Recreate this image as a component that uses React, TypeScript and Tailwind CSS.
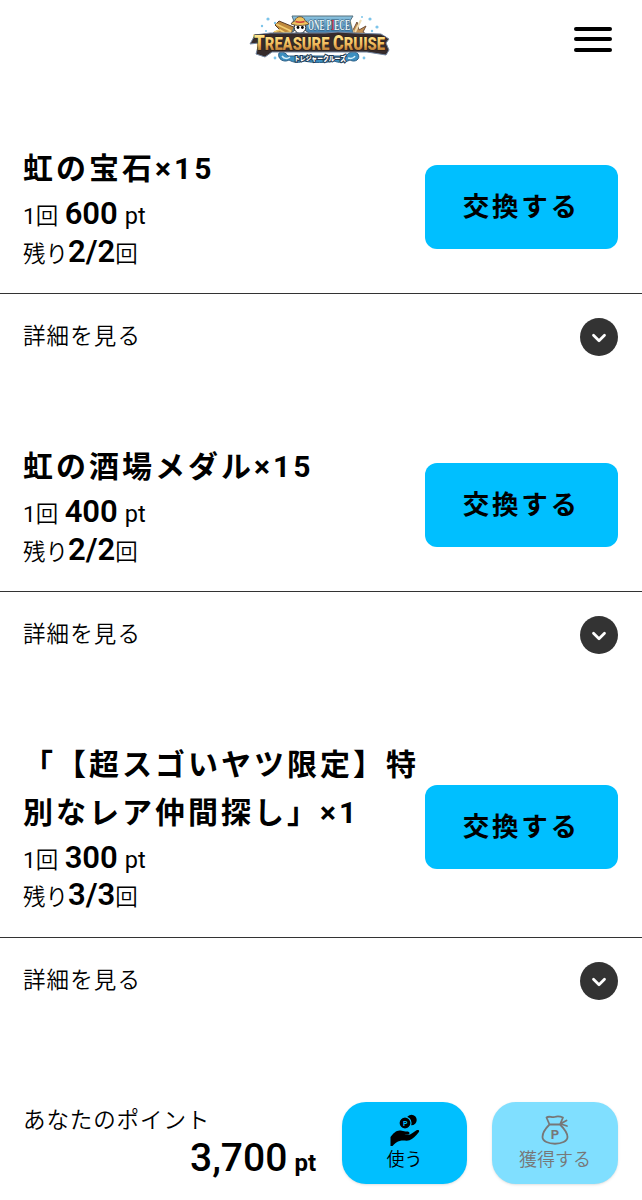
import { ChevronDown } from "lucide-react";

const rewards = [
  { title: "虹の宝石×15", cost: 600, left: "2/2" },
  { title: "虹の酒場メダル×15", cost: 400, left: "2/2" },
  { title: "「【超スゴいヤツ限定】特別なレア仲間探し」×1", cost: 300, left: "3/3" },
];

function Logo() {
  return (
    <svg width="144" height="54" viewBox="0 0 144 54" role="img" aria-label="One Piece Treasure Cruise">
      <defs>
        <linearGradient id="gold" x1="0" y1="0" x2="0" y2="1">
          <stop offset="0.2" stopColor="#ffe58a" />
          <stop offset="0.55" stopColor="#f0b95c" />
          <stop offset="0.9" stopColor="#a8672a" />
        </linearGradient>
        <linearGradient id="sea" x1="0" y1="0" x2="0" y2="1">
          <stop offset="0" stopColor="#8cc4e0" />
          <stop offset="1" stopColor="#3f7fae" />
        </linearGradient>
      </defs>

      {/* splashes and bubbles */}
      <path d="M31 41c3-2 7 0 9 3h58c3-4 8-6 12-2 3 5-3 9-8 6-6 3-11 3-16 1-8 2-21 2-30 0-5 2-10 2-15-1-5 3-12-1-10-7Z" fill="#3c8fc0" stroke="#2c5f86" />
      <path d="M34 44c2 3 5 3 8 1m58 1c3 1 6 0 7-2" fill="none" stroke="#d5f1fb" strokeWidth="1.5" />
      <g fill="#7cc4ea">
        <circle cx="20" cy="7" r="1.6" />
        <circle cx="27" cy="11" r="1.2" />
        <circle cx="14" cy="14" r="1.2" />
        <circle cx="18" cy="19" r="1" />
        <circle cx="122" cy="7" r="1.6" />
        <circle cx="129" cy="15" r="1.6" />
        <circle cx="114" cy="5" r="1" />
        <circle cx="124" cy="19" r="1.2" />
        <circle cx="27" cy="46" r="1.4" />
        <circle cx="116" cy="46" r="1.4" />
      </g>

      {/* treasure piles */}
      <path d="M23 24c2-4 6-5 9-6l-5-5 4-4 17 7 6 8Z" fill="#c08a3d" stroke="#573b28" />
      <path d="m28 12 15 7M26 20l6-2 5 3 6-1" fill="none" stroke="#f3cf72" strokeWidth="1.6" />
      <path d="m96 24 4-10 5 4 4-8 2 8 7-4-3 6 6 4Z" fill="#c59152" stroke="#71513c" />
      <path d="m102 9 3 12m8-13-6 12" stroke="#f0ddb2" strokeWidth="2" />

      {/* upper wordmark */}
      <path d="M44 4h61l-3 5 3 12H44l3-9Z" fill="url(#sea)" stroke="#55707f" />
      <text x="60" y="17.5" textLength="42" lengthAdjust="spacingAndGlyphs" fontSize="14" fontWeight="900" fill="#e4f3f7" stroke="#2f5878" strokeWidth="1.2" paintOrder="stroke" className="font-['Liberation_Serif',serif]">
        ONE P<tspan fill="#dc3945">I</tspan>ECE
      </text>

      {/* straw hat skull */}
      <path d="m44 10 16 12m0-12L44 22" stroke="#3c4145" strokeWidth="3" />
      <path d="m44 10 16 12m0-12L44 22" stroke="#fff" strokeWidth="1.7" />
      <circle cx="52" cy="15.500" r="5.800" fill="#fff" stroke="#333" />
      <path d="M43 12c1-2 3-2 4-3.500 1-5 9-5 10 0 1 1.500 3 1.500 4 3.500-6 2-12 2-18 0Z" fill="#efc45e" stroke="#55402d" strokeWidth="0.8" />
      <path d="M47.500 9.500q4.500 1.500 9 0" fill="none" stroke="#cc3838" strokeWidth="1.5" />
      <circle cx="50" cy="15.500" r="1.4" />
      <circle cx="54.400" cy="15.500" r="1.400" />

      {/* main wordmark */}
      <path d="m7 23 15-2 55 0 13-1 16 1 27 1 8 5-3 4 3 7-3 5-19-3H24l-7 5-9-3 3-11-9 1Z" fill="#352b2c" stroke="#7386a0" />
      <text fill="url(#gold)" stroke="#2c1b10" strokeWidth="1.2" paintOrder="stroke" fontWeight="900" fontSize="18" x="6" y="38" textLength="131" lengthAdjust="spacingAndGlyphs" className="font-['Roboto',sans-serif]">
        <tspan fontSize="21">T</tspan>REASURE <tspan fontSize="20">C</tspan>RUISE
      </text>
      <text x="46" y="48.500" textLength="52" lengthAdjust="spacingAndGlyphs" fontSize="6.500" fontWeight="900" fill="#fff" stroke="#223951" strokeWidth="2" paintOrder="stroke" className="font-['Noto_Sans_CJK_JP',sans-serif]">
        トレジャークルーズ
      </text>
    </svg>
  );
}

function CoinHandIcon() {
  return (
    <svg width="32" height="32" viewBox="0 0 32 32">
      <circle cx="22.500" cy="6" r="5.200" />
      <circle cx="16" cy="9" r="6" stroke="#00bfff" strokeWidth="1.2" />
      <text x="14" y="11.500" fontSize="7" fontWeight="700" fill="#00bfff" className="font-['Roboto',sans-serif]">P</text>
      <path d="M1.500 23c3-4 6-7 10-6.500 2 0 3 1 5 1 3-.2 4 .5 4 1.700 0 1.300-2 1.500-5 1.600 4 .7 6-.3 8-1.800l4-2.700c2-1 3.500.3 2.200 2-3 3.700-6 7-9.200 8-3 .8-6-.2-9 .4-4 .7-6 3.300-8.500 5.800H1.500Z" />
    </svg>
  );
}

function MoneyBagIcon() {
  return (
    <svg width="32" height="32" viewBox="0 0 32 32" fill="none" stroke="currentColor" strokeWidth="1.8" strokeLinecap="round" strokeLinejoin="round">
      <path d="M10.500 10.500 7.500 3.500c3-2 5 .5 8-.5s6-.5 8.500.5L21 10.500M10.500 10.500H21M10.500 10.500C6.500 14.500 3.500 18.500 3.500 23c0 9 25 9 25 0 0-4.500-3.500-8.500-7.500-12.500M22 9.500l5.500-3M22 10l6 2" />
      <text x="11.700" y="24.500" fontSize="13" fontWeight="700" fill="currentColor" stroke="none" className="font-['Roboto',sans-serif]">P</text>
    </svg>
  );
}

export default function App() {
  return (
    <main className="flex h-[1200px] w-[642px] flex-col overflow-hidden bg-white font-['Roboto','Noto_Sans_CJK_JP',sans-serif] text-black [text-spacing-trim:space-all]" lang="ja">
      <header className="grid h-[83px] shrink-0 grid-cols-[1fr_144px_1fr] items-center px-6 pb-[5px]">
        <span />
        <div className="-ml-px">
          <Logo />
        </div>
        <button className="mr-1.5 flex flex-col gap-[6.500px] justify-self-end" aria-label="メニュー">
          <span className="h-1 w-[38px] rounded-full bg-black" />
          <span className="h-1 w-[38px] rounded-full bg-black" />
          <span className="h-1 w-[38px] rounded-full bg-black" />
        </button>
      </header>

      {rewards.map((reward) => (
        <section key={reward.title} className="shrink-0 pt-[62px]">
          <div className="flex items-center justify-between border-b border-[#333] pr-6 pb-[20.5px] pl-[23px]">
            <div className="w-[400px]">
              <h2 className="text-[30px] leading-[47.5px] font-bold tracking-[3px]">{reward.title}</h2>
              <div className="mt-[4.5px] h-[38.5px] text-[22.5px] leading-[38.5px] font-[350] whitespace-nowrap">
                <span className="font-normal">1</span>回 <b className="ml-px text-[31px] leading-none font-semibold">{reward.cost}</b>
                <span className="ml-[7px] text-[23.5px] leading-none font-normal">pt</span>
              </div>
              <div className="h-[37px] text-[22.5px] leading-[37px] font-[350] whitespace-nowrap">
                残り<b className="text-[31px] leading-none font-semibold">{reward.left}</b>回
              </div>
            </div>
            <button className="mb-[3.5px] h-[84px] w-[193.5px] shrink-0 rounded-xl bg-[#00bfff] text-[26.5px] font-bold tracking-[2.7px]">
              交換する
            </button>
          </div>
          <div className="flex h-[86px] items-center justify-between pr-6 pl-[23px] mb-px">
            <span className="text-[22.5px] font-[350] tracking-[1.1px]">詳細を見る</span>
            <span className="flex size-[38px] items-center justify-center rounded-full bg-[#333] text-white">
              <ChevronDown className="mt-0.5 size-[22px]" strokeWidth={3} />
            </span>
          </div>
        </section>
      ))}

      <footer className="mt-[77.5px] flex h-[82px] shrink-0 items-start justify-between pr-6 pl-[23px]">
        <div className="w-[293px]">
          <div className="h-[37px] text-[22.5px] leading-[37px] font-[350] tracking-[0.9px]">あなたのポイント</div>
          <div className="text-right text-[39px] leading-[39px] font-medium">
            3,700<span className="ml-[7px] text-[24px] font-bold">pt</span>
          </div>
        </div>
        <div className="flex gap-[25px]">
          <button className="flex h-[82px] w-[125px] flex-col items-center rounded-3xl bg-[#00bfff] pt-3 text-[18px] leading-7 font-[350] shadow-sm">
            <CoinHandIcon />
            使う
          </button>
          <button className="flex h-[82px] w-[126px] flex-col items-center rounded-3xl bg-[#80dfff] pt-3 text-[18px] leading-7 font-[350] text-[#777] shadow-sm">
            <MoneyBagIcon />
            獲得する
          </button>
        </div>
      </footer>
    </main>
  );
}
